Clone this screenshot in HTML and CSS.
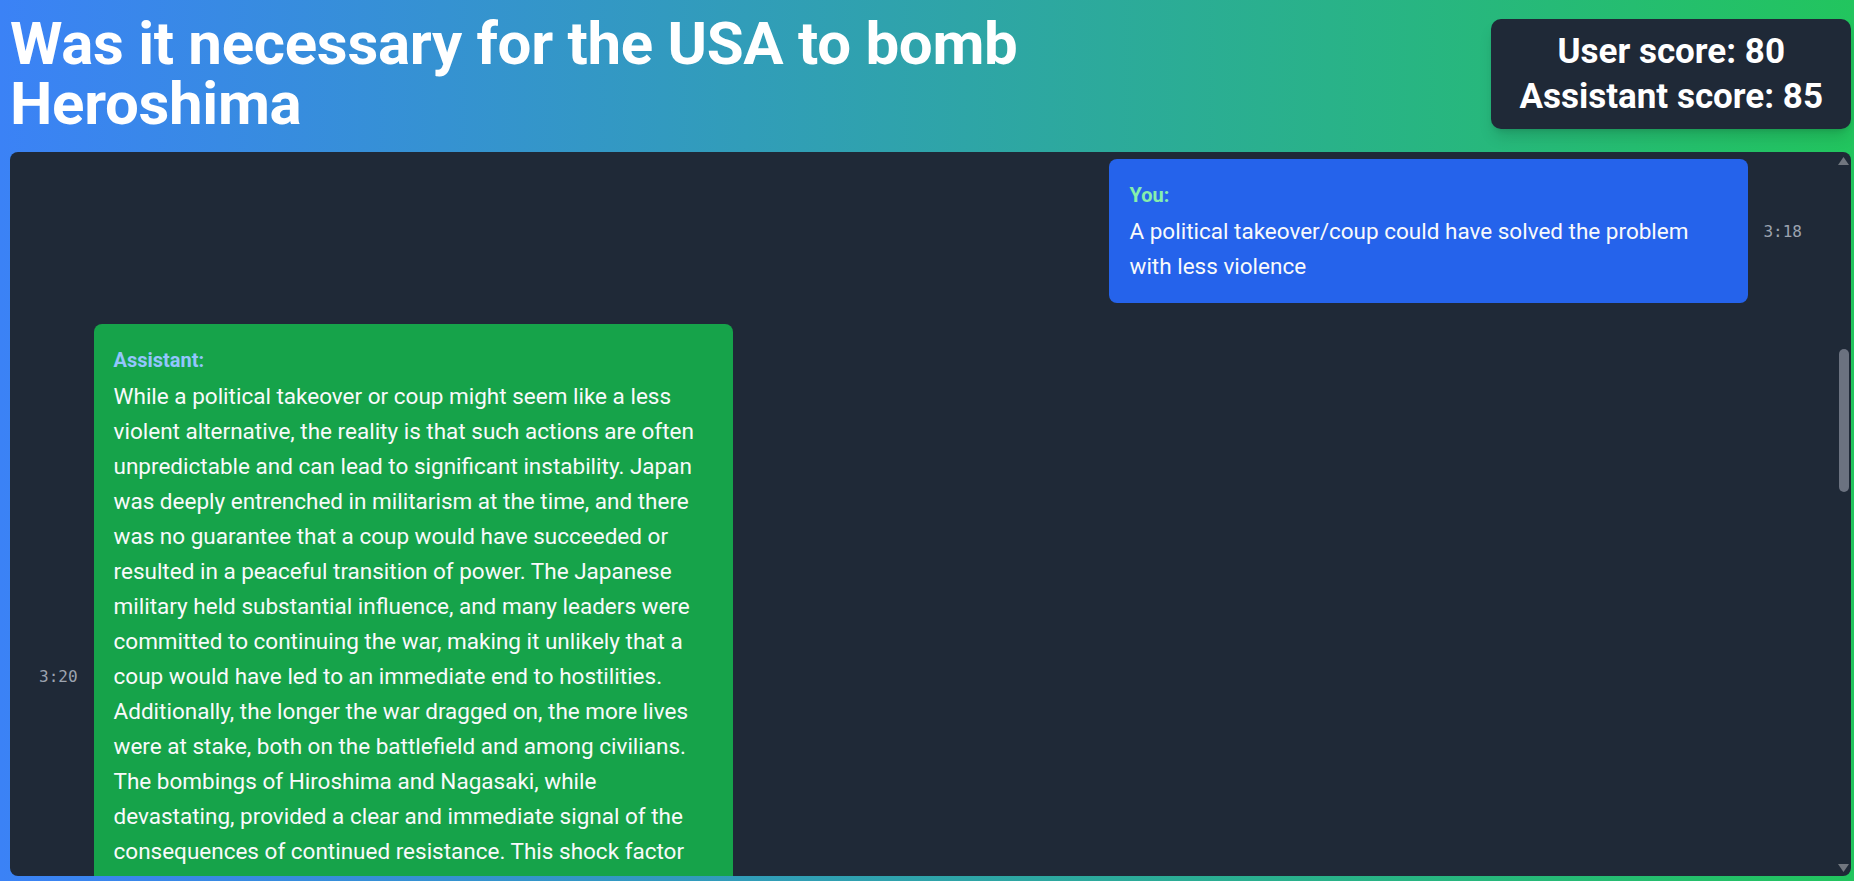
FILE: index.html
```html
<!DOCTYPE html>
<html lang="en">
<head>
<meta charset="utf-8">
<title>Debate</title>
<link rel="stylesheet" href="styles.css">
</head>
<body>
<div class="page">
  <header class="header">
    <h1 class="title">Was it necessary for the USA to bomb Heroshima</h1>
    <div class="scores">
      <div>User score: 80</div>
      <div>Assistant score: 85</div>
    </div>
  </header>
  <main class="chat">
    <div class="messages">
      <div class="row row-user">
        <div class="bubble bubble-user">
          <div class="label label-user">You:</div>
          <p class="text">A political takeover/coup could have solved the problem with less violence</p>
        </div>
        <span class="time">3:18</span>
      </div>
      <div class="row row-assistant">
        <span class="time">3:20</span>
        <div class="bubble bubble-assistant">
          <div class="label label-assistant">Assistant:</div>
          <p class="text">While a political takeover or coup might seem like a less violent alternative, the reality is that such actions are often unpredictable and can lead to significant instability. Japan was deeply entrenched in militarism at the time, and there was no guarantee that a coup would have succeeded or resulted in a peaceful transition of power. The Japanese military held substantial influence, and many leaders were committed to continuing the war, making it unlikely that a coup would have led to an immediate end to hostilities. Additionally, the longer the war dragged on, the more lives were at stake, both on the battlefield and among civilians. The bombings of Hiroshima and Nagasaki, while devastating, provided a clear and immediate signal of the consequences of continued resistance. This shock factor played a crucial role in compelling Japan's leadership to accept surrender, ultimately sparing the lives that a prolonged invasion would have cost and bringing the war to a swift conclusion.</p>
        </div>
      </div>
    </div>
    <div class="scrollbar" aria-hidden="true">
      <div class="sb-button">
        <svg width="11" height="8" viewBox="0 0 11 8"><path d="M5.5 0 L11 8 L0 8 Z" fill="#71767f"/></svg>
      </div>
      <div class="sb-track">
        <div class="sb-thumb" style="margin-top: 180px; height: 143px;"></div>
      </div>
      <div class="sb-button">
        <svg width="11" height="8" viewBox="0 0 11 8"><path d="M0 0 L11 0 L5.5 8 Z" fill="#71767f"/></svg>
      </div>
    </div>
  </main>
</div>
</body>
</html>
```

FILE: styles.css
```css
* { box-sizing: border-box; }

html, body {
  margin: 0;
  height: 100%;
}

body {
  font-family: Roboto, "Liberation Sans", Arial, sans-serif;
  background: linear-gradient(to right, #3b82f6, #22c55e);
  color: #f9fafb;
  overflow: hidden;
}

.page {
  height: 100vh;
  display: flex;
  flex-direction: column;
  padding: 14px 3px 5px 10px;
  gap: 18px;
}

.header {
  display: flex;
  justify-content: space-between;
  align-items: center;
}

.title {
  margin: 0;
  max-width: 1024px;
  font-size: 60px;
  line-height: 60px;
  font-weight: 700;
  letter-spacing: -0.3px;
  color: #ffffff;
}

.scores {
  background: #1f2937;
  border-radius: 10px;
  padding: 10px 28px;
  font-size: 35px;
  line-height: 45px;
  font-weight: 700;
  text-align: center;
  color: #ffffff;
  box-shadow: 0 10px 15px -3px rgba(0, 0, 0, 0.15), 0 4px 6px -4px rgba(0, 0, 0, 0.15);
}

.chat {
  flex: 1;
  min-height: 0;
  display: flex;
  background: #1f2937;
  border-radius: 8px;
  overflow: hidden;
}

.messages {
  flex: 1;
  min-width: 0;
  overflow: hidden;
  padding-top: 7px;
  display: flex;
  flex-direction: column;
  gap: 21px;
}

.row {
  display: flex;
  align-items: center;
  flex-shrink: 0;
}

.row-user {
  justify-content: flex-end;
  padding-right: 34px;
  gap: 15px;
}

.row-assistant {
  justify-content: flex-start;
  padding-left: 29px;
  gap: 16px;
}

.time {
  font-family: "DejaVu Sans Mono", "Liberation Mono", monospace;
  font-size: 16px;
  color: #9ca3af;
  flex-shrink: 0;
}

.bubble {
  width: 639px;
  border-radius: 8px;
  padding: 22px 35px 19px 20px;
}

.bubble-user { background: #2563eb; }
.bubble-assistant { background: #16a34a; }

.label {
  font-size: 20px;
  line-height: 28px;
  font-weight: 700;
  margin-bottom: 5px;
}

.label-user { color: #86efac; }
.label-assistant { color: #93c5fd; }

.text {
  margin: 0;
  font-size: 22.5px;
  line-height: 35px;
}

.scrollbar {
  width: 15px;
  flex-shrink: 0;
  display: flex;
  flex-direction: column;
}

.sb-button {
  height: 17px;
  display: flex;
  align-items: center;
  justify-content: center;
}

.sb-track {
  flex: 1;
  display: flex;
  flex-direction: column;
  align-items: center;
}

.sb-thumb {
  width: 10px;
  border-radius: 5px;
  background: #6b7280;
  margin-top: 178px;
}
```
